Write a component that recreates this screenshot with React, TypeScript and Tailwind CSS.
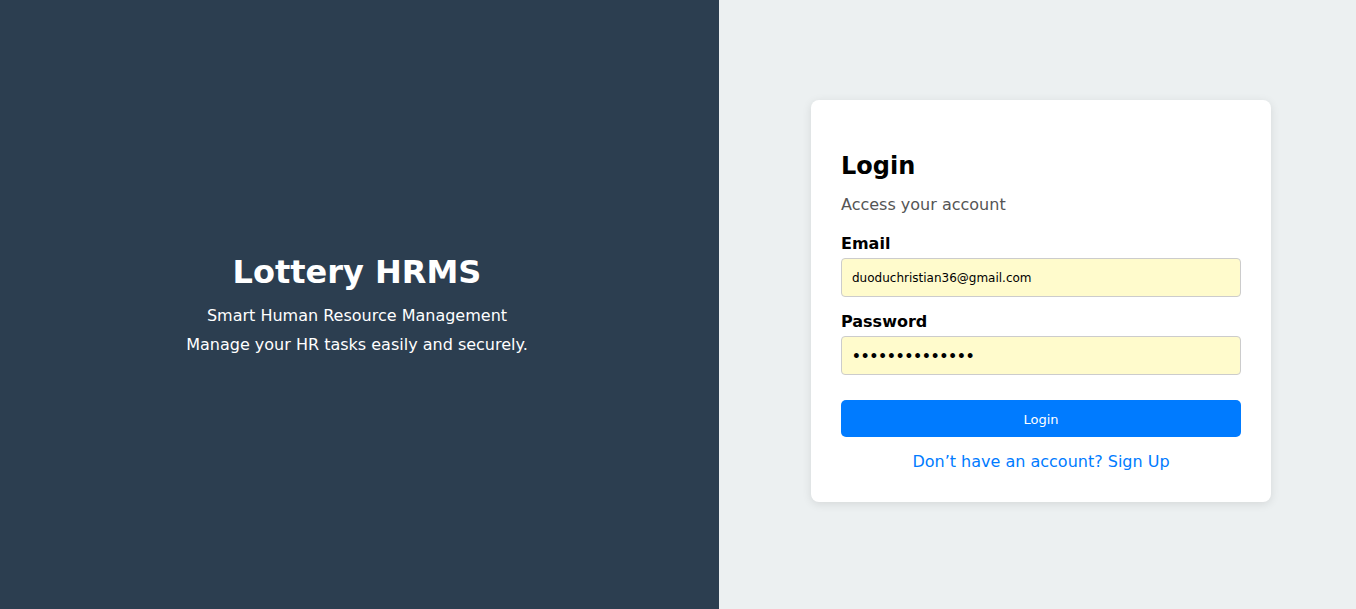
import React from "react";

export default function App() {
  return (
    <div
      className="flex h-[609px] w-full overflow-hidden"
      style={{ fontFamily: '"DejaVu Sans", sans-serif' }}
    >
      <div className="flex w-[719px] shrink-0 flex-col items-center justify-center bg-[#2c3e50] pr-[5px] pt-[3px] text-center text-white">
        <h1 className="text-[32px] font-bold leading-[37px]">Lottery HRMS</h1>
        <p className="mt-[10px] text-[16px] leading-[29px]">Smart Human Resource Management</p>
        <p className="text-[16px] leading-[29px]">Manage your HR tasks easily and securely.</p>
      </div>
      <div className="flex flex-1 items-start bg-[#ecf0f1] pl-[92px] pt-[100px]">
        <div className="w-[460px] rounded-[8px] bg-white px-[30px] pb-[31px] pt-[52px] shadow-[0_2px_10px_rgba(0,0,0,0.1)]">
          <h2 className="text-[24px] font-bold leading-[28px] text-black">Login</h2>
          <p className="mt-[15px] text-[16px] leading-[19px] text-[#555]">Access your account</p>
          <label className="mt-[20px] block text-[16px] font-bold leading-[19px] text-black">Email</label>
          <input
            type="email"
            defaultValue="duoduchristian36@gmail.com"
            className="mt-[5px] block h-[39px] w-full rounded-[4px] border border-[#ccc] bg-[#fffbcc] px-[10px] text-[12px] text-black outline-none"
            style={{ fontFamily: '"DejaVu Sans", sans-serif' }}
          />
          <label className="mt-[15px] block text-[16px] font-bold leading-[19px] text-black">Password</label>
          <input
            type="password"
            defaultValue="abcdefghijklmn"
            className="mt-[5px] block h-[39px] w-full rounded-[4px] border border-[#ccc] bg-[#fffbcc] px-[10px] text-[13.7px] font-bold text-black outline-none"
            style={{ fontFamily: '"DejaVu Sans", sans-serif' }}
          />
          <button
            className="mt-[25px] block h-[37px] w-full rounded-[5px] bg-[#007bff] pt-[2px] text-[13px] text-white"
            style={{ fontFamily: '"DejaVu Sans", sans-serif' }}
          >
            Login
          </button>
          <p className="mt-[15px] text-center text-[16px] leading-[19px] text-[#007bff]">
            Don’t have an account? Sign Up
          </p>
        </div>
      </div>
    </div>
  );
}
